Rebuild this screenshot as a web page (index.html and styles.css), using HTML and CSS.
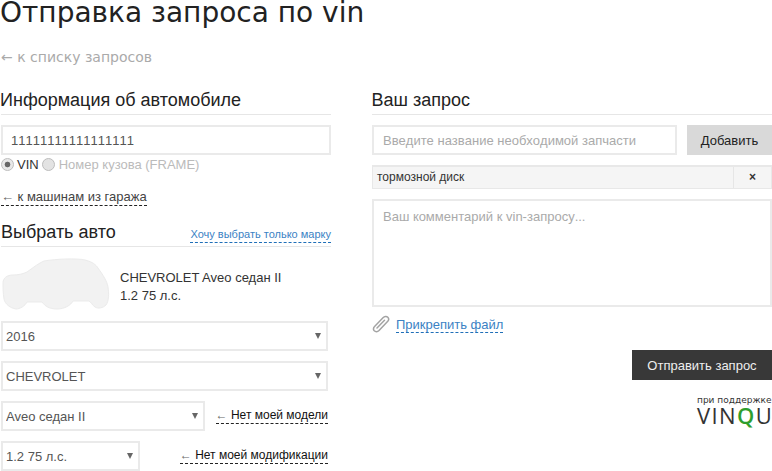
FILE: index.html
```html
<!DOCTYPE html>
<html lang="ru">
<head>
<meta charset="utf-8">
<title>Отправка запроса по vin</title>
<link rel="stylesheet" href="styles.css">
</head>
<body>
<h1 class="title">Отправка запроса по vin</h1>
<a class="back" href="#">← к списку запросов</a>
<div class="columns">
  <section class="left">
    <h2 class="head">Информация об автомобиле</h2>
    <input class="field vin" type="text" value="11111111111111111">
    <div class="radios">
      <label class="radio"><span class="dot on"></span>VIN</label>
      <label class="radio off"><span class="dot"></span>Номер кузова (FRAME)</label>
    </div>
    <div class="garage"><a class="dash dark" href="#"><span class="arr">←</span> к машинам из гаража</a></div>
    <div class="head pick">
      <h2>Выбрать авто</h2>
      <a class="dash blue small" href="#">Хочу выбрать только марку</a>
    </div>
    <div class="car">
      <svg class="car-img" width="112" height="54" viewBox="0 0 112 54">
        <path d="M2 26C2 21 6 18 12 18C17 18 22 17 26 15C33 10 38 6 43 4C55 2 75 1 84 3C92 5 95 8 97 11C102 18 106 24 107 30C108 36 108 44 105 48C102 51 97 52 94 50C91 48 90 45 88 44L72 44C70 48 64 52 56 52C48 52 44 49 41 45L26 45C24 49 19 52 15 52C9 51 4 47 3 42C2 36 2 30 2 26Z" fill="#f2f2f2" stroke="#ebebeb" stroke-width="1"/>
      </svg>
      <div class="car-text">
        <div>CHEVROLET Aveo седан II</div>
        <div>1.2 75 л.с.</div>
      </div>
    </div>
    <div class="sel-row"><div class="sel full"><select><option>2016</option></select></div></div>
    <div class="sel-row"><div class="sel full"><select><option>CHEVROLET</option></select></div></div>
    <div class="sel-row">
      <div class="sel model"><select><option>Aveo седан II</option></select></div>
      <a class="dash black" href="#"><span class="arr">←</span> Нет моей модели</a>
    </div>
    <div class="sel-row">
      <div class="sel mod"><select><option>1.2 75 л.с.</option></select></div>
      <a class="dash black" href="#"><span class="arr">←</span> Нет моей модификации</a>
    </div>
  </section>
  <section class="right">
    <h2 class="head">Ваш запрос</h2>
    <div class="add-row">
      <input class="field part" type="text" placeholder="Введите название необходимой запчасти">
      <button class="add" type="button">Добавить</button>
    </div>
    <div class="item">
      <span class="item-name">тормозной диск</span>
      <span class="item-x">×</span>
    </div>
    <textarea class="field comment" placeholder="Ваш комментарий к vin-запросу..."></textarea>
    <div class="attach">
      <svg class="clip" width="18" height="20" viewBox="0 0 18 20">
        <path d="M16 6L7 15.500C5.500 17 3.500 17 2.300 15.800C1.200 14.600 1.300 12.800 2.800 11.300L11 2.800C12.500 1.200 14.500 .9 15.800 2.200C17 3.400 16.800 5.300 15.300 6.800L7.500 15M5 13L12.500 5.200" fill="none" stroke="#a3a3a3" stroke-width="1.500" stroke-linecap="round"/>
      </svg>
      <a class="dash blue attach-link" href="#">Прикрепить файл</a>
    </div>
    <div class="send-row"><button class="send" type="button">Отправить запрос</button></div>
    <div class="logo">
      <div class="logo-sub">при поддержке</div>
      <div class="logo-name">VIN<b>Q</b>U</div>
    </div>
  </section>
</div>
</body>
</html>
```
FILE: styles.css
```css
* { box-sizing: border-box; }
html, body { margin: 0; padding: 0; height: 471px; overflow: hidden; background: #fff; }
body { font-family: "Liberation Sans", Arial, sans-serif; font-size: 13px; color: #333; padding: 0 0 0 1px; }
a { text-decoration: none; }
.title { margin: 0; font-family: "DejaVu Sans", sans-serif; font-weight: 400; font-size: 28px; line-height: 26px; height: 26px; color: #222; white-space: nowrap; text-indent: -1px; }
.back { display: block; margin-top: 22px; font-family: "DejaVu Sans", sans-serif; font-size: 14px; line-height: 18px; color: #aaa; }
.columns { display: flex; gap: 41px; margin-top: 17px; }
.left { width: 330px; flex: none; }
.right { width: 400px; flex: none; }
.head { margin: 0; height: 32px; padding-top: 3px; font-weight: 400; font-size: 18px; line-height: 28px; color: #222; border-bottom: 1px solid #e6e6e6; text-indent: -1px; }
.right .head { text-indent: -.5px; }
.field { display: block; border: 2px solid #eaeaea; background: #fff; font-family: "Liberation Sans", Arial, sans-serif; font-size: 13px; color: #555; outline: none; border-radius: 0; font-kerning: none; }
.field::placeholder { color: #aaa; opacity: 1; }
.vin { width: 330px; height: 30px; margin-top: 10px; padding: 0 8px; }
.radios { display: flex; gap: 3px; height: 16px; margin-top: 1px; align-items: center; }
.radio { display: flex; align-items: center; gap: 3px; font-size: 13px; color: #333; }
.radio.off { color: #bbb; gap: 4px; }
.dot { width: 13px; height: 13px; border-radius: 50%; background: #e3e3e3; border: 1px solid #bdbdbd; display: block; }
.dot.on { background: radial-gradient(circle, #666 0 2.500px, #e8e8e8 3.200px); }
.garage { margin-top: 17px; height: 19px; }
.dash { display: inline-block; font-size: 12px; line-height: 15px; border-bottom: 1px dashed #222; }
.dark { color: #444; font-size: 13px; line-height: 16px; }
.black { color: #111; }
.arr { color: #666; }
.blue { color: #3b82c4; border-bottom-color: #1f6fb8; }
.small { font-size: 11px; }
.attach-link { font-size: 13px; }
.pick { display: flex; justify-content: space-between; align-items: flex-end; margin-top: 6px; padding: 0 0 3px; height: 33px; text-indent: 0; }
.pick h2 { margin: 0; font-size: 18px; font-weight: 400; line-height: 22px; }
.car { display: flex; align-items: flex-start; gap: 7px; height: 54px; margin-top: 10px; width: 327px; }
.car-img { flex: none; }
.car-text { font-size: 13px; line-height: 18px; color: #333; padding-top: 12px; }
.sel-row { display: flex; justify-content: space-between; align-items: center; width: 327px; height: 30px; margin-top: 10px; }
.sel { position: relative; height: 30px; }
.sel::after { content: ""; position: absolute; right: 7px; top: 12px; border-left: 3px solid transparent; border-right: 3px solid transparent; border-top: 6px solid #666; }
.sel select { appearance: none; width: 100%; height: 100%; border: 2px solid #eaeaea; background: #fff; padding: 0 3px; font-family: "Liberation Sans", Arial, sans-serif; font-size: 13px; color: #555; border-radius: 0; outline: none; }
.full { width: 327px; }
.model { width: 204px; }
.mod { width: 139px; }
.add-row { display: flex; justify-content: space-between; margin-top: 10px; }
.part { width: 305px; height: 30px; padding: 0 9px; }
.add { width: 85px; height: 30px; border: 0; background: #d9d9d9; font-family: "Liberation Sans", Arial, sans-serif; font-size: 13px; color: #222; padding: 0; }
.item { display: flex; height: 24px; margin-top: 10px; background: #f5f5f5; border: 1px solid #e8e8e8; border-top-width: 2px; font-size: 12px; line-height: 21px; color: #333; }
.item-name { flex: 1; padding-left: 4px; }
.item-x { width: 38px; border-left: 1px solid #e6e6e6; text-align: center; font-weight: 700; font-size: 12px; }
.comment { width: 400px; height: 108px; margin-top: 10px; padding: 8px 9px; resize: none; }
.attach { display: flex; align-items: center; gap: 6px; height: 20px; margin-top: 8px; }
.clip { flex: none; }
.send-row { display: flex; justify-content: flex-end; margin-top: 15px; }
.send { width: 140px; height: 30px; border: 0; background: #383838; color: #eee; font-family: "Liberation Sans", Arial, sans-serif; font-size: 13px; padding: 0; }
.logo { width: 75px; margin: 16px 0 0 auto; color: #333; }
.logo-sub { font-family: "DejaVu Sans", sans-serif; font-size: 9px; line-height: 9px; white-space: nowrap; }
.logo-name { font-family: "Open Sans", sans-serif; font-size: 22px; line-height: 20px; letter-spacing: 1.400px; white-space: nowrap; }
.logo-name b { font-weight: 600; color: #2e9e2e; }
```
